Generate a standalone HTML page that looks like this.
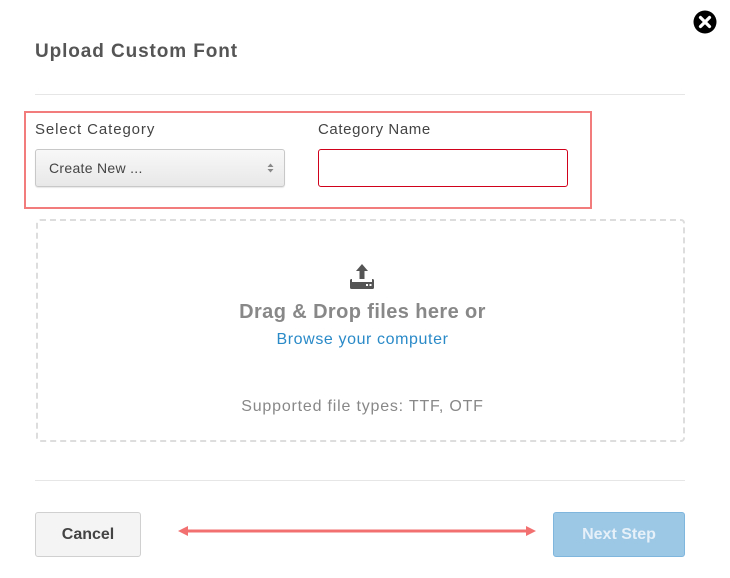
<!DOCTYPE html>
<html><head><style>
body{margin:0;width:730px;height:578px;background:#fff;font-family:"Liberation Sans",sans-serif;position:relative;overflow:hidden}
.a{position:absolute}
</style></head><body>
<svg class="a" style="left:693px;top:10px" width="24" height="24" viewBox="0 0 24 24"><circle cx="12" cy="12" r="11.5" fill="#000"/><path d="M7.5 7.5L16.5 16.5M16.5 7.5L7.5 16.5" stroke="#fff" stroke-width="3.2" stroke-linecap="round"/></svg>
<div class="a" style="left:35px;top:41px;font-size:19px;font-weight:bold;color:#555;letter-spacing:0.9px">Upload Custom Font</div>
<div class="a" style="left:35px;top:94px;width:650px;height:1px;background:#e6e6e6"></div>
<div class="a" style="left:24px;top:111px;width:564px;height:94px;border:2px solid #f27c7c"></div>
<div class="a" style="left:35px;top:121px;font-size:15px;color:#444;letter-spacing:0.9px">Select Category</div>
<div class="a" style="left:318px;top:121px;font-size:15px;color:#444;letter-spacing:0.6px">Category Name</div>
<div class="a" style="left:35px;top:149px;width:248px;height:36px;border:1px solid #c8c8c8;border-radius:3px;background:linear-gradient(#f8f8f8,#e8e8e8);box-shadow:0 1px 1px rgba(0,0,0,.1)"></div>
<div class="a" style="left:49px;top:160px;font-size:14px;color:#444;letter-spacing:0.3px">Create New ...</div>
<svg class="a" style="left:267px;top:163px" width="7" height="10"><path d="M0.5 4L3.5 0.5L6.5 4ZM0.5 6L3.5 9.5L6.5 6Z" fill="#888"/></svg>
<div class="a" style="left:318px;top:149px;width:248px;height:36px;border:1px solid #d0021b;border-radius:3px"></div>
<div class="a" style="left:36px;top:219px;width:645px;height:219px;border:2px dashed #ddd;border-radius:4px"></div>
<svg class="a" style="left:350px;top:264px" width="24" height="26" viewBox="0 0 24 26"><path d="M12 0L18 7H14.5V15H9.5V7H6Z" fill="#555"/><rect x="0" y="15" width="24" height="10" rx="1.5" fill="#555"/><rect x="2" y="15" width="20" height="3" fill="#fff"/><rect x="16" y="20" width="2" height="2" fill="#fff"/><rect x="19.5" y="20" width="2" height="2" fill="#fff"/></svg>
<div class="a" style="left:0;width:725px;text-align:center;top:301px;font-size:20px;font-weight:bold;color:#888;letter-spacing:0.4px">Drag &amp; Drop files here or</div>
<div class="a" style="left:0;width:725px;text-align:center;top:331px;font-size:16px;color:#2a8ac8;letter-spacing:0.6px">Browse your computer</div>
<div class="a" style="left:0;width:725px;text-align:center;top:398px;font-size:16px;color:#888;letter-spacing:0.8px">Supported file types: TTF, OTF</div>
<div class="a" style="left:35px;top:480px;width:650px;height:1px;background:#e6e6e6"></div>
<div class="a" style="left:35px;top:512px;width:104px;height:43px;border:1px solid #d0d0d0;border-radius:3px;background:#f4f4f4;text-align:center;line-height:43px;font-size:16px;font-weight:bold;color:#444">Cancel</div>
<svg class="a" style="left:176px;top:524px" width="362" height="14"><path d="M10 7H352" stroke="#f27070" stroke-width="3"/><path d="M2 7L12 2V12Z M360 7L350 2V12Z" fill="#f27070"/></svg>
<div class="a" style="left:553px;top:512px;width:130px;height:43px;border:1px solid #7fb6de;border-radius:3px;background:#9cc8e6;text-align:center;line-height:43px;font-size:16px;font-weight:bold;color:#e6f0f8">Next Step</div>
</body></html>
